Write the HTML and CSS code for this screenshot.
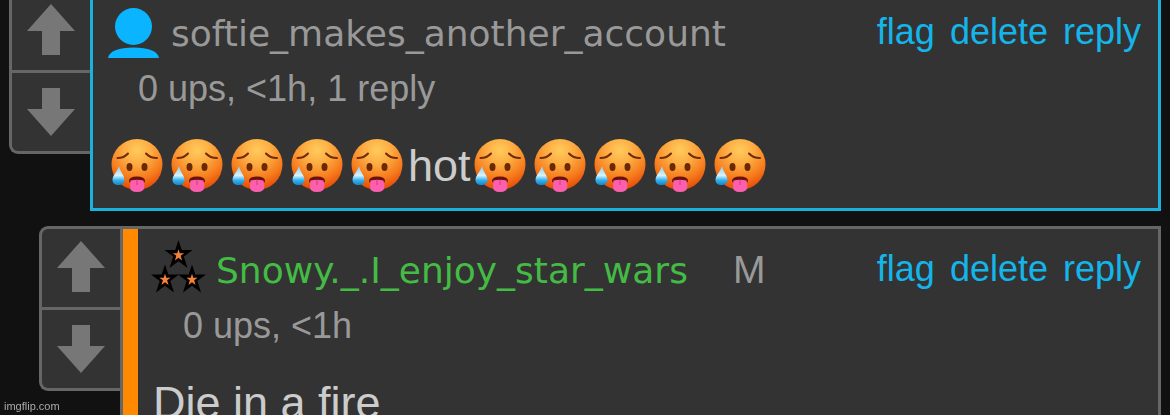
FILE: index.html
```
<!DOCTYPE html>
<html lang="en">

<head>
    <meta charset="UTF-8">
    <meta name="viewport" content="width=device-width, initial-scale=1.0">
    <title>Comments</title>
    <link rel="stylesheet" href="styles.css">
</head>

<body>
    <!-- shared shapes -->
    <svg class="defs" aria-hidden="true">
        <defs>
            <radialGradient id="face" cx="50%" cy="22%" r="80%">
                <stop offset="0" stop-color="#ffcb5c" />
                <stop offset="0.35" stop-color="#fdab41" />
                <stop offset="0.7" stop-color="#f67a1c" />
                <stop offset="1" stop-color="#e34404" />
            </radialGradient>
            <linearGradient id="drop" x1="0" y1="0" x2="0" y2="1">
                <stop offset="0" stop-color="#8fd0ee" />
                <stop offset="0.5" stop-color="#d3f3fc" />
                <stop offset="0.75" stop-color="#35b1ee" />
                <stop offset="1" stop-color="#1685cc" />
            </linearGradient>
            <symbol id="hot" viewBox="0 0 60 54">
                <circle cx="29" cy="25.500" r="25.500" fill="url(#face)" />
                <path d="M9.500 19 Q16 19 20 14.500M38 14.500 Q42 19 49 19" fill="none" stroke="#702b08" stroke-width="2" stroke-linecap="round" />
                <ellipse cx="21.500" cy="28" rx="3" ry="4" fill="#6a2804" />
                <ellipse cx="36.500" cy="28" rx="3" ry="4" fill="#6a2804" />
                <path d="M21 42 Q21 37.500 29 37.500 T37 42 Q37 44 35 43.500H23 Q21 44 21 42Z" fill="#6b1206" />
                <path d="M22.500 41.500 Q29 40 35.500 41.500 L36.500 47 Q36.500 53 29 53 T22 47Z" fill="#fb5fae" />
                <path d="M29 41V46" stroke="#d83a86" stroke-width="1" />
                <path d="M11 27 C12 33 16.500 36 16.500 41 C16.500 44 14 46 10.500 46 C7 46 4.500 44 4.500 41 C4.500 36 9.500 33 11 27Z" fill="url(#drop)" />
            </symbol>
            <symbol id="up" viewBox="0 0 48 51">
                <path d="M24 0L48 27H33V51H15V27H0Z" fill="#777" />
            </symbol>
            <symbol id="down" viewBox="0 0 48 48">
                <path d="M15 0H33V21H48L24 48L0 21H15Z" fill="#777" />
            </symbol>
            <path id="star" d="M0 -14.500L3.300 -4.500H14L5.300 2.100L9 13.500L0 6.800L-9 13.500L-5.300 2.100L-14 -4.500H-3.300Z" />
        </defs>
    </svg>

    <main class="thread">
        <div class="comment">
            <div class="votes">
                <button class="vote" aria-label="Upvote"><svg class="arrow-up"><use href="#up" /></svg></button>
                <button class="vote" aria-label="Downvote"><svg class="arrow-down"><use href="#down" /></svg></button>
            </div>
            <article class="box new">
                <header class="head">
                    <svg class="usericon" viewBox="0 0 54 54">
                        <circle cx="25.500" cy="18.500" r="18.500" fill="#0ab4ff" />
                        <path d="M0 50C1 43 11 39.500 25.500 39.500S50 43 51 50Z" fill="#0ab4ff" />
                    </svg>
                    <a class="username" href="#">softie_makes_another_account</a>
                    <nav class="actions">
                        <a href="#">flag</a>
                        <a href="#">delete</a>
                        <a href="#">reply</a>
                    </nav>
                </header>
                <p class="info">0 ups, &lt;1h, 1 reply</p>
                <p class="content"><svg class="emoji"><use href="#hot" /></svg><svg class="emoji"><use href="#hot" /></svg><svg class="emoji"><use href="#hot" /></svg><svg class="emoji"><use href="#hot" /></svg><svg class="emoji"><use href="#hot" /></svg>hot<svg class="emoji"><use href="#hot" /></svg><svg class="emoji"><use href="#hot" /></svg><svg class="emoji"><use href="#hot" /></svg><svg class="emoji"><use href="#hot" /></svg><svg class="emoji"><use href="#hot" /></svg></p>
            </article>
        </div>

        <div class="comment nested">
            <div class="votes">
                <button class="vote" aria-label="Upvote"><svg class="arrow-up"><use href="#up" /></svg></button>
                <button class="vote" aria-label="Downvote"><svg class="arrow-down"><use href="#down" /></svg></button>
            </div>
            <article class="box marked">
                <header class="head">
                    <svg class="usericon" viewBox="0 0 54 54">
                        <use href="#star" x="25.500" y="9.500" />
                        <use href="#star" x="12" y="34" />
                        <use href="#star" x="39" y="34" />
                        <g fill="#f5813a">
                            <use href="#star" transform="translate(25.500 10) scale(0.4)" />
                            <use href="#star" transform="translate(12 34.500) scale(0.4)" />
                            <use href="#star" transform="translate(39 34.500) scale(0.4)" />
                        </g>
                    </svg>
                    <a class="username green" href="#">Snowy._.I_enjoy_star_wars</a>
                    <span class="mod">M</span>
                    <nav class="actions">
                        <a href="#">flag</a>
                        <a href="#">delete</a>
                        <a href="#">reply</a>
                    </nav>
                </header>
                <p class="info">0 ups, &lt;1h</p>
                <p class="content">Die in a fire</p>
            </article>
        </div>
    </main>

    <div class="watermark">imgflip.com</div>
</body>

</html>
```

FILE: styles.css
```
body {
    margin: 0;
    background: #111;
    color: #ccc;
    font-family: "Liberation Sans", Arial, sans-serif;
    overflow: hidden;
}

a {
    text-decoration: none;
}

p {
    margin: 0;
}

.defs {
    position: absolute;
    width: 0;
    height: 0;
}

/* the list is scrolled a little past the top of the first comment */
.thread {
    margin-top: -11px;
    padding: 0 9px;
}

.comment {
    display: flex;
    align-items: flex-start;
    margin-bottom: 15px;
}

.nested {
    margin-left: 30px;
}

.votes {
    box-sizing: border-box;
    flex: none;
    width: 81px;
    background: #666;
    border: 3px solid #666;
    border-right: 0;
    border-radius: 9px 0 0 9px;
    display: grid;
    gap: 3px;
}

.vote {
    box-sizing: border-box;
    height: 78px;
    padding: 0;
    border: 0;
    background: #333;
    display: flex;
    align-items: center;
    justify-content: center;
    cursor: pointer;
}

.vote:first-child {
    padding-bottom: 3px;
    border-top-left-radius: 6px;
}

.vote:last-child {
    border-bottom-left-radius: 6px;
}

.arrow-up {
    width: 48px;
    height: 51px;
}

.arrow-down {
    width: 48px;
    height: 48px;
}

.box {
    flex: 1;
    background: #333;
    border: 3px solid #666;
    padding: 16px 17px 14px 15px;
}

.new {
    border-color: #1ab2dd;
}

.marked {
    box-shadow: inset 15px 0 #ff8a00;
    padding-left: 30px;
}

.head {
    display: flex;
    align-items: flex-start;
    height: 54px;
    line-height: 54px;
}

.usericon {
    flex: none;
    width: 54px;
    height: 54px;
    margin-right: 9px;
    overflow: visible;
}

.username {
    font-family: Verdana, "DejaVu Sans", sans-serif;
    font-size: 36px;
    line-height: 52px;
    color: #999;
}

.green {
    color: #4b4;
}

.mod {
    margin-left: 45px;
    font-size: 39px;
    line-height: 50px;
    color: #999;
}

.actions {
    display: flex;
    gap: 15px;
    margin-left: auto;
    font-size: 36px;
    line-height: 48px;
}

.actions a {
    color: #13b5ea;
}

.info {
    padding-left: 30px;
    font-size: 36px;
    line-height: 54px;
    color: #999;
}

.content {
    margin-top: 21px;
    font-size: 45px;
    line-height: 57px;
}

.emoji {
    width: 60px;
    height: 54px;
    vertical-align: -12px;
}

.watermark {
    position: fixed;
    left: 4px;
    bottom: 2px;
    font-size: 11px;
    line-height: 13px;
    color: #aaa;
}
```
